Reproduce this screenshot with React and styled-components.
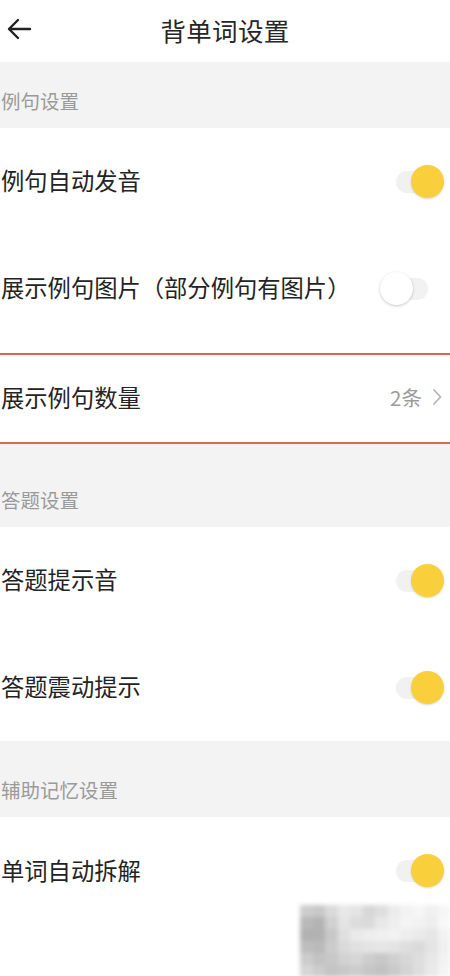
import React, { useState } from "react";
import styled, { createGlobalStyle } from "styled-components";

const GlobalStyle = createGlobalStyle`
  html, body {
    margin: 0;
    padding: 0;
    background: #ffffff;
  }
  body {
    font-family: "Noto Sans CJK SC", "Noto Sans", sans-serif;
    -webkit-font-smoothing: antialiased;
  }
`;

const Page = styled.div`
  position: relative;
  width: 450px;
  height: 976px;
  overflow: hidden;
  background: #ffffff;
`;

const Header = styled.header`
  height: 62px;
  display: grid;
  grid-template-columns: 62px 1fr 62px;
  align-items: center;
  background: #ffffff;
`;

const BackButton = styled.button`
  border: 0;
  background: none;
  padding: 0 0 0 6px;
  height: 62px;
  display: flex;
  align-items: center;
  color: #222;
  margin-top: -4px;
`;

const Title = styled.h1`
  margin: 0;
  text-align: center;
  font-size: 25.5px;
  font-weight: 400;
  color: #262626;
  letter-spacing: 0.3px;
  margin-top: -3px;
`;

const SectionHeader = styled.div`
  height: ${(p) => p.$h}px;
  box-sizing: border-box;
  background: #f3f3f3;
  display: flex;
  align-items: flex-end;
  padding: 0 0 17px 1px;
  font-size: 19.5px;
  line-height: 20px;
  color: #9a9a9a;
`;

const Group = styled.div`
  background: #ffffff;
  display: flex;
  flex-direction: column;
`;

const Row = styled.div`
  height: ${(p) => p.$h || 107}px;
  box-sizing: border-box;
  display: flex;
  align-items: center;
  justify-content: space-between;
  padding: 0 6px 0 1px;
`;

const LinkRow = styled(Row)`
  margin-top: 11px;
  height: 91px;
  border-top: 2px solid #d9694e;
  border-bottom: 2px solid #d9694e;
  padding-top: 0;
`;

const Label = styled.span`
  font-size: 23.3px;
  color: #232323;
  line-height: 30px;
  margin-top: -3px;
`;

const Value = styled.span`
  display: flex;
  align-items: center;
  gap: 10px;
  font-size: 20.5px;
  color: #9b9b9b;
  margin-right: 2px;
  margin-top: -3px;
`;

const SwitchTrack = styled.button`
  position: relative;
  width: 50px;
  height: 36px;
  border: 0;
  padding: 0;
  background: none;
  cursor: pointer;
  margin-right: ${(p) => (p.$on ? 0 : 14)}px;

  &::before {
    content: "";
    position: absolute;
    left: 2px;
    right: 2px;
    top: 7px;
    height: 22px;
    border-radius: 11px;
    background: ${(p) => (p.$on ? "#f1f1ef" : "#f2f2f2")};
  }
`;

const Thumb = styled.span`
  position: absolute;
  top: 1px;
  left: ${(p) => (p.$on ? 17 : 0)}px;
  width: 33px;
  height: 33px;
  border-radius: 50%;
  background: ${(p) => (p.$on ? "#f9cf3b" : "#ffffff")};
  box-shadow: ${(p) =>
    p.$on ? "0 1px 2px rgba(150,150,80,0.35)" : "0 1px 3px rgba(0,0,0,0.22)"};
`;

const Mosaic = styled.div`
  position: absolute;
  left: 300px;
  top: 905px;
  width: 150px;
  height: 72px;
  display: grid;
  grid-template-columns: repeat(12, 1fr);
  grid-auto-rows: 12px;
  filter: blur(2px);
  pointer-events: none;
`;

const Tile = styled.span`
  display: block;
`;

const Toggle = ({ on, onChange }) => (
  <SwitchTrack $on={on} onClick={onChange} aria-pressed={on}>
    <Thumb $on={on} />
  </SwitchTrack>
);

const BackIcon = () => (
  <svg width="26" height="26" viewBox="0 0 26 26" fill="none">
    <path
      d="M24 13H3M12 4L3 13l9 9"
      stroke="#222"
      strokeWidth="2.4"
      strokeLinecap="round"
      strokeLinejoin="round"
    />
  </svg>
);

const Chevron = () => (
  <svg width="10" height="18" viewBox="0 0 10 18" fill="none">
    <path d="M2 2l6.5 7L2 16" stroke="#b5b5b5" strokeWidth="1.8" strokeLinecap="round" strokeLinejoin="round" />
  </svg>
);

// grey values for the blurred stamp in the corner
const shades = [
  205, 200, 218, 232, 228, 215, 222, 236, 242, 246, 240, 246,
  185, 180, 208, 228, 220, 218, 232, 238, 244, 242, 238, 248,
  178, 178, 200, 224, 234, 238, 240, 242, 238, 234, 230, 242,
  190, 186, 204, 218, 225, 228, 230, 228, 222, 218, 228, 240,
  205, 195, 200, 210, 214, 205, 200, 208, 215, 222, 232, 242,
  214, 205, 196, 200, 205, 198, 194, 202, 212, 222, 234, 244,
];

export default function App() {
  const [state, setState] = useState({
    autoSpeak: true,
    showImage: false,
    answerSound: true,
    answerVibrate: true,
    autoSplit: true,
  });
  const flip = (k) => () => setState((s) => ({ ...s, [k]: !s[k] }));

  return (
    <>
      <GlobalStyle />
      <Page>
        <Header>
          <BackButton aria-label="返回">
            <BackIcon />
          </BackButton>
          <Title>背单词设置</Title>
          <span />
        </Header>

        <SectionHeader $h={66}>例句设置</SectionHeader>
        <Group>
          <Row>
            <Label>例句自动发音</Label>
            <Toggle on={state.autoSpeak} onChange={flip("autoSpeak")} />
          </Row>
          <Row>
            <Label>展示例句图片（部分例句有图片）</Label>
            <Toggle on={state.showImage} onChange={flip("showImage")} />
          </Row>
          <LinkRow>
            <Label>展示例句数量</Label>
            <Value>
              2条
              <Chevron />
            </Value>
          </LinkRow>
        </Group>

        <SectionHeader $h={83}>答题设置</SectionHeader>
        <Group>
          <Row>
            <Label>答题提示音</Label>
            <Toggle on={state.answerSound} onChange={flip("answerSound")} />
          </Row>
          <Row>
            <Label>答题震动提示</Label>
            <Toggle on={state.answerVibrate} onChange={flip("answerVibrate")} />
          </Row>
        </Group>

        <SectionHeader $h={76}>辅助记忆设置</SectionHeader>
        <Group>
          <Row $h={108}>
            <Label>单词自动拆解</Label>
            <Toggle on={state.autoSplit} onChange={flip("autoSplit")} />
          </Row>
        </Group>

        <Mosaic aria-hidden="true">
          {shades.map((g, i) => (
            <Tile key={i} style={{ background: `rgb(${g},${g},${g})` }} />
          ))}
        </Mosaic>
      </Page>
    </>
  );
}
